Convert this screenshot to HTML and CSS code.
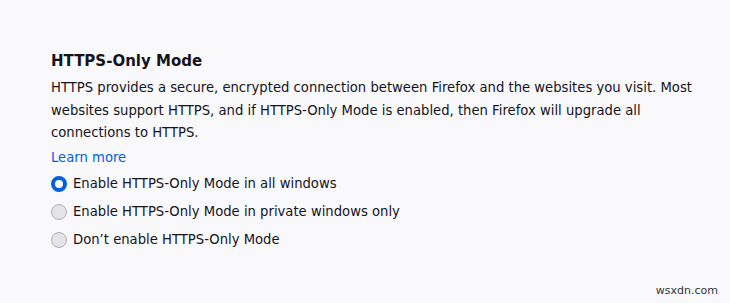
FILE: index.html
```html
<!DOCTYPE html>
<html>
<head>
<meta charset="utf-8">
<link rel="stylesheet" href="styles.css">
</head>
<body>
<main class="page">
  <section class="group">
    <h2 class="title">HTTPS-Only Mode</h2>
    <p class="desc">HTTPS provides a secure, encrypted connection between Firefox and the websites you visit. Most websites support HTTPS, and if HTTPS-Only Mode is enabled, then Firefox will upgrade all connections to HTTPS.</p>
    <a class="link" href="#">Learn more</a>
    <div class="options">
      <label class="option"><span class="radio checked"></span><span>Enable HTTPS-Only Mode in all windows</span></label>
      <label class="option"><span class="radio"></span><span>Enable HTTPS-Only Mode in private windows only</span></label>
      <label class="option"><span class="radio"></span><span>Don’t enable HTTPS-Only Mode</span></label>
    </div>
  </section>
  <div class="watermark">wsxdn.com</div>
</main>
</body>
</html>
```
FILE: styles.css
```css
html, body {
  margin: 0;
  padding: 0;
  background: #f9f9fb;
}
body {
  font-family: "DejaVu Sans", sans-serif;
  color: #15141a;
  width: 730px;
  height: 303px;
  overflow: hidden;
}
.page {
  position: relative;
  width: 730px;
  height: 303px;
}
.group {
  padding: 49px 20px 0 51px;
}
.title {
  margin: 0;
  font-size: 15px;
  font-weight: bold;
  line-height: 24px;
}
.desc {
  margin: 4px 0 0;
  font-size: 13.2px;
  line-height: 22.5px;
}
.link {
  display: inline-block;
  color: #0061e0;
  text-decoration: none;
  font-size: 13.2px;
  line-height: 22px;
  margin-top: 2px;
}
.options {
  display: flex;
  flex-direction: column;
  margin-top: 1px;
}
.option {
  display: flex;
  align-items: center;
  gap: 6px;
  height: 28px;
  font-size: 13.2px;
}
.radio {
  box-sizing: border-box;
  width: 16px;
  height: 16px;
  border-radius: 50%;
  border: 1px solid #b1b1b9;
  background: #e3e3e8;
  flex: none;
}
.radio.checked {
  border: 4.5px solid #0061e0;
  background: #fff;
}
.watermark {
  position: absolute;
  right: 12px;
  bottom: 6px;
  font-family: "DejaVu Sans", sans-serif;
  font-size: 11px;
  color: #333;
}
```
